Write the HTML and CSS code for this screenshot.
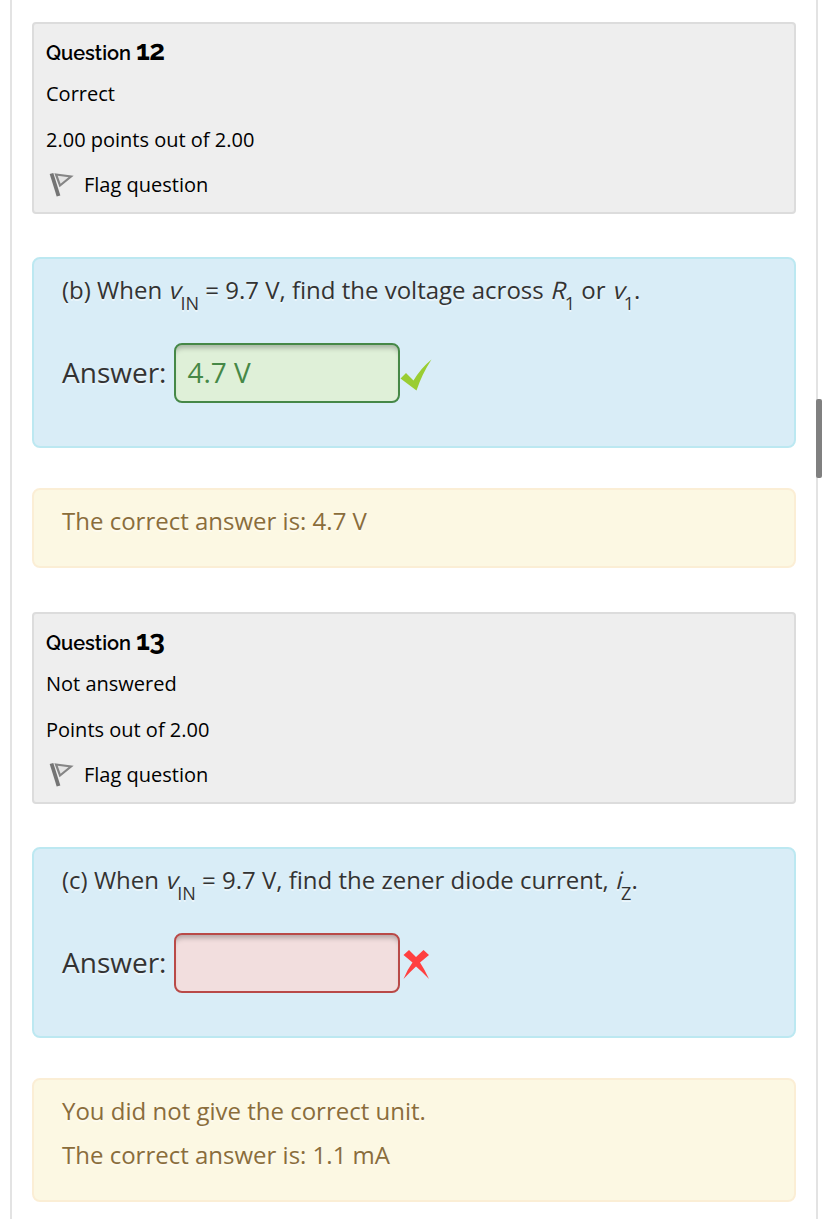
FILE: index.html
```html
<!DOCTYPE html>
<html lang="en">
<head>
  <meta charset="UTF-8">
  <meta name="viewport" content="width=device-width, initial-scale=1.0">
  <title>Quiz review</title>
  <link rel="stylesheet" href="styles.css">
</head>
<body>
  <div class="region-main">
    <div class="question">
      <div class="info">
        <h3 class="no">Question <span class="qno">12</span></h3>
        <div class="state">Correct</div>
        <div class="grade">2.00 points out of 2.00</div>
        <div class="questionflag">
          <svg class="flag" viewBox="0 0 30 30" width="30" height="30">
            <path d="M5.5 3.5 L12.5 26" stroke="#747474" stroke-width="3.8" fill="none"/>
            <path d="M10 4.5 L25 6.500 L14 15.5 Z" stroke="#858585" stroke-width="2.2" fill="#e4e4e4"/>
          </svg>
          <span>Flag question</span>
        </div>
      </div>
      <div class="formulation">
        <p class="qtext">(b) When <i>v</i><sub>IN</sub> = 9.7 V, find the voltage across <i>R</i><sub>1</sub> or <i>v</i><sub>1</sub>.</p>
        <div class="ablock">
          <label for="answer12">Answer:</label>
          <input type="text" id="answer12" class="correct" value="4.7 V" readonly>
          <svg class="mark" viewBox="0 0 32 32" width="32" height="32">
            <path d="M0.5 19.5 L6 14 L13.5 21.5 Q21 9 31.5 0.5 Q22 15 16.5 31.5 Z" fill="#9acd32"/>
          </svg>
        </div>
      </div>
      <div class="outcome">
        <div>The correct answer is: 4.7 V</div>
      </div>
    </div>

    <div class="question">
      <div class="info">
        <h3 class="no">Question <span class="qno">13</span></h3>
        <div class="state">Not answered</div>
        <div class="grade">Points out of 2.00</div>
        <div class="questionflag">
          <svg class="flag" viewBox="0 0 30 30" width="30" height="30">
            <path d="M5.5 3.5 L12.5 26" stroke="#747474" stroke-width="3.8" fill="none"/>
            <path d="M10 4.5 L25 6.500 L14 15.5 Z" stroke="#858585" stroke-width="2.2" fill="#e4e4e4"/>
          </svg>
          <span>Flag question</span>
        </div>
      </div>
      <div class="formulation">
        <p class="qtext">(c) When <i>v</i><sub>IN</sub> = 9.7 V, find the zener diode current, <i>i</i><sub>Z</sub>.</p>
        <div class="ablock">
          <label for="answer13">Answer:</label>
          <input type="text" id="answer13" class="incorrect" value="" readonly>
          <svg class="mark" viewBox="0 0 32 32" width="32" height="32">
            <path d="M3.5 6 L9 1 L16 8 L23.5 1 L29 6 L20 13.5 Q25 21 29 30 Q22.5 23 16 17.5 Q10 23 3.5 30 Q7 21 12.5 13.5 Z" fill="#ff4040"/>
          </svg>
        </div>
      </div>
      <div class="outcome">
        <div>You did not give the correct unit.</div>
        <div>The correct answer is: 1.1 mA</div>
      </div>
    </div>
  </div>
  <div class="scroll-thumb"></div>
</body>
</html>
```
FILE: styles.css
```css
* {
  box-sizing: border-box;
}

body {
  margin: 0;
  height: 1219px;
  overflow: hidden;
  font-family: "Open Sans", sans-serif;
  background-color: #fff;
  color: #000;
}

.region-main {
  height: 1219px;
  margin: 0 9px 0 10px;
  padding: 22px 20px 0;
  border-left: 2px solid #e3e3e3;
  border-right: 2px solid #e3e3e3;
}

.question {
  margin-bottom: 44px;
}

.info {
  height: 192px;
  padding: 12px;
  border: 2px solid #dcdcdc;
  border-radius: 4px;
  background-color: #eee;
  font-size: 20px;
  line-height: 45.5px;
}

.no {
  height: 35px;
  margin: 0;
  font-family: Raleway, Lato, sans-serif;
  font-size: 20px;
  font-weight: 600;
  line-height: 34px;
}

.qno {
  font-size: 28px;
  font-weight: 700;
  line-height: 0;
  letter-spacing: -0.5px;
}

.questionflag {
  display: flex;
  align-items: center;
}

.flag {
  margin-right: 8px;
  filter: blur(0.6px);
}

.formulation {
  height: 191px;
  margin-top: 43px;
  padding: 9px 28px;
  border: 2px solid #bce8f1;
  border-radius: 8px;
  background-color: #d9edf7;
  color: #333;
  text-shadow: 0 2px 0 rgba(255, 255, 255, 0.5);
}

.qtext {
  margin: 0;
  height: 75px;
  font-size: 24px;
  line-height: 44px;
}

/* slanted upright letters for the variables */
.qtext i {
  display: inline-block;
  font-style: normal;
  line-height: 1;
  transform: skewX(-14deg);
  transform-origin: 0 89%;
}

.qtext sub {
  font-size: 18px;
  line-height: 0;
  vertical-align: -11px;
}

.ablock {
  display: flex;
  align-items: center;
  font-size: 28px;
}

.ablock label {
  padding-bottom: 2px;
}

.ablock input {
  width: 226px;
  height: 60px;
  margin-left: 8px;
  padding: 0 11px 2px;
  border: 2px solid;
  border-radius: 8px;
  box-shadow: inset 0 6px 5px -3px rgba(0, 0, 0, 0.25);
  font-family: inherit;
  font-size: 28px;
}

.ablock .correct {
  color: #468847;
  border-color: #468847;
  background-color: #dff0d8;
}

.ablock .incorrect {
  color: #b94a48;
  border-color: #b94a48;
  background-color: #f2dede;
}

.mark {
  margin-top: 4px;
}

.outcome {
  margin-top: 40px;
  padding: 9px 28px 23px;
  border: 2px solid #fbeed5;
  border-radius: 8px;
  background-color: #fcf8e3;
  color: #8a6d3b;
  font-size: 24px;
  line-height: 44px;
  text-shadow: 0 2px 0 rgba(255, 255, 255, 0.5);
}

/* scrollbar handle over the right edge */
.scroll-thumb {
  position: absolute;
  top: 399px;
  left: 816px;
  width: 6px;
  height: 79px;
  border-radius: 2px;
  background-color: #808080;
}
```
